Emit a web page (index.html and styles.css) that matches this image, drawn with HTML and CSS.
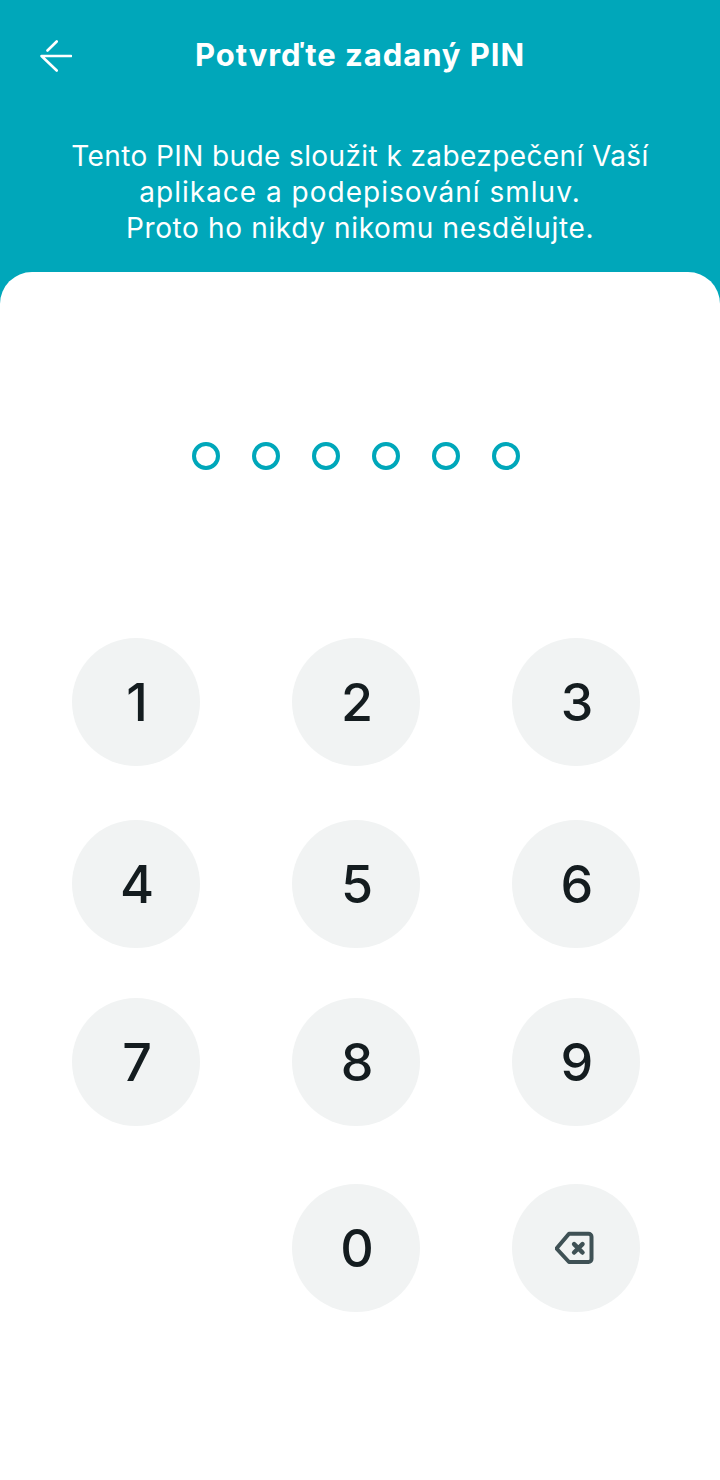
FILE: index.html
```html
<!DOCTYPE html>
<html lang="cs">
<head>
    <meta charset="UTF-8">
    <meta name="viewport" content="width=device-width, initial-scale=1.0">
    <title>Potvrďte zadaný PIN</title>
    <link rel="stylesheet" href="styles.css">
</head>
<body>
    <header class="top">
        <div class="top-bar">
            <button class="back" aria-label="Zpět">
                <svg width="32" height="32" viewBox="0 0 32 32" fill="none" stroke="#fff" stroke-width="2.600" stroke-linecap="round" stroke-linejoin="round">
                    <path d="M31 16H1.500l15.200 14.500M16.700 1.500 7.500 10.500"/>
                </svg>
            </button>
            <h1 class="title">Potvrďte zadaný PIN</h1>
        </div>
        <p class="intro">
            <span class="intro-line">Tento PIN bude sloužit k zabezpečení Vaší</span>
            <span class="intro-line intro-line-wide">aplikace a podepisování smluv.</span>
            <span class="intro-line intro-line-mid">Proto ho nikdy nikomu nesdělujte.</span>
        </p>
    </header>

    <main class="card">
        <div class="dots">
            <span class="dot"></span>
            <span class="dot"></span>
            <span class="dot"></span>
            <span class="dot"></span>
            <span class="dot"></span>
            <span class="dot"></span>
        </div>
        <div class="keypad">
            <button class="key">1</button>
            <button class="key">2</button>
            <button class="key">3</button>
            <button class="key">4</button>
            <button class="key">5</button>
            <button class="key">6</button>
            <button class="key">7</button>
            <button class="key">8</button>
            <button class="key">9</button>
            <button class="key key-zero">0</button>
            <button class="key key-icon" aria-label="Smazat">
                <svg width="42" height="34" viewBox="0 0 42 34" fill="none" stroke="#3f5155" stroke-linecap="round" stroke-linejoin="round">
                    <path stroke-width="4" d="M14 2.800H33.500a3 3 0 0 1 3 3V28a3 3 0 0 1-3 3H14L1.500 17.500z"/>
                    <path stroke-width="4.500" d="m19.100 13.100 8.400 8.400M27.500 13.100 19.100 21.500"/>
                </svg>
            </button>
        </div>
    </main>
</body>
</html>
```

FILE: styles.css
```css
* {
    box-sizing: border-box;
}

body {
    margin: 0;
    height: 1480px;
    overflow: hidden;
    background-color: #00a7ba;
    font-family: Inter, "Noto Sans", sans-serif;
}

button {
    border: none;
    padding: 0;
    background: none;
    font-family: inherit;
}

.top {
    height: 272px;
    padding-top: 40px;
    color: #fff;
}

.top-bar {
    display: flex;
    align-items: center;
    justify-content: center;
    height: 32px;
    position: relative;
}

.back {
    position: absolute;
    left: 40px;
    top: 0;
    width: 32px;
    height: 32px;
    line-height: 0;
}

.title {
    margin: 0 0 4px;
    font-size: 31px;
    font-weight: 700;
    letter-spacing: 0.95px;
}

.intro {
    margin: 66px 0 0;
    font-size: 28px;
    font-weight: 400;
    letter-spacing: 0.4px;
    line-height: 36px;
    text-align: center;
}

.intro-line {
    display: block;
}

.intro-line-wide {
    letter-spacing: 1px;
}

.intro-line-mid {
    letter-spacing: 0.65px;
}

.card {
    height: 1208px;
    padding: 170px 8px 0 0;
    background-color: #fff;
    border-radius: 32px 32px 0 0;
}

.dots {
    display: flex;
    justify-content: center;
    gap: 32px;
}

.dot {
    width: 28px;
    height: 28px;
    border: 4px solid #00a7ba;
    border-radius: 50%;
}

.keypad {
    display: grid;
    grid-template-columns: repeat(3, 128px);
    grid-template-rows: 182px 178px 186px 128px;
    justify-content: center;
    column-gap: 92px;
    margin-top: 168px;
}

.key {
    display: flex;
    align-items: center;
    justify-content: center;
    width: 128px;
    height: 128px;
    padding-left: 2px;
    border-radius: 50%;
    background-color: #f1f3f3;
    color: #141c1f;
    font-size: 52px;
    font-weight: 500;
}

.key-zero {
    grid-column: 2;
}

.key-icon {
    padding-left: 0;
}
```
